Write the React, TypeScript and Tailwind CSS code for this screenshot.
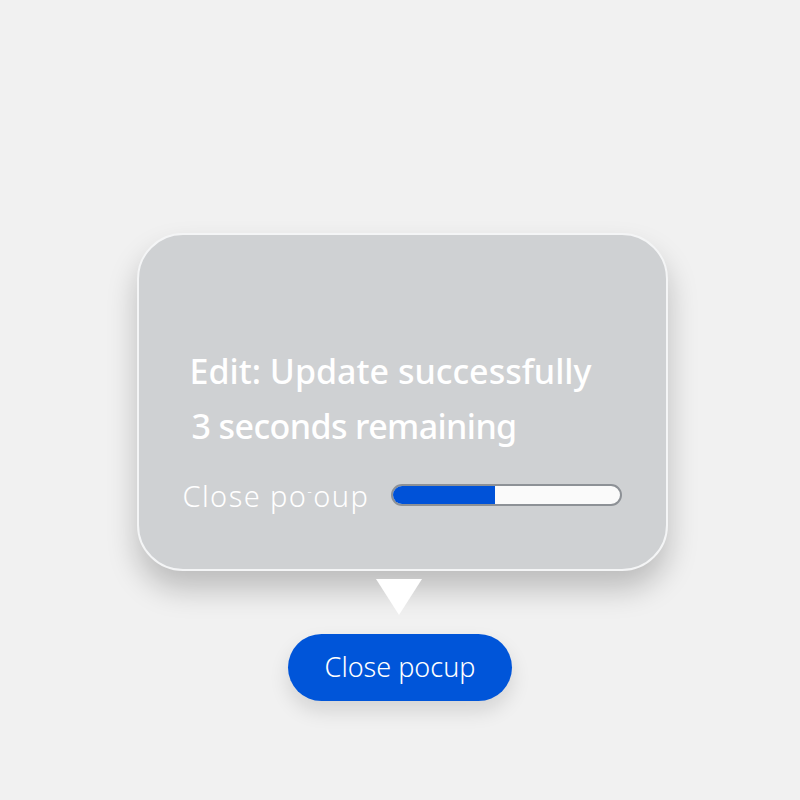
import React from "react";

export default function App() {
  return (
    <div
      className="w-[800px] h-[800px] bg-[#f1f1f1] flex flex-col items-center pt-[233px]"
      style={{ fontFamily: '"Noto Sans", "Open Sans", sans-serif' }}
    >
      <div className="w-[531px] h-[338px] rounded-[46px] border-2 border-[#f4f5f6] bg-[#cfd1d3] shadow-[0_18px_30px_rgba(0,0,0,0.22)] flex flex-col pl-[51px] pt-[113px] ml-[4px]">
        <div className="text-white text-[34px] font-medium leading-[46px] tracking-[0px]">
          Edit: Update successfully
        </div>
        <div className="text-white text-[34px] font-medium leading-[46px] mt-[9px] ml-[2px] -tracking-[0.6px]">
          3 seconds remaining
        </div>
        <div className="flex items-center mt-[22px] -ml-[7px]">
          <div className="text-white text-[29px] font-light leading-[40px] tracking-[1.4px] w-[208px]">
            Close po<span className="text-[14px] align-super">-</span>oup
          </div>
          <div className="mt-[4px] w-[231px] h-[22px] rounded-full bg-[#fafafa] border-2 border-[#8d9196] overflow-hidden flex">
            <div className="w-[102px] h-full bg-[#0052d8]" />
          </div>
        </div>
      </div>
      <svg width="46" height="36" viewBox="0 0 46 36" className="mt-[8px] -ml-[2px]">
        <polygon points="0,0 46,0 23,36" fill="#ffffff" />
      </svg>
      <button className="mt-[19px] w-[224px] h-[67px] rounded-full bg-[#0055d9] text-white text-[27px] font-light shadow-[0_10px_20px_rgba(0,0,0,0.12)]">
        Close pocup
      </button>
    </div>
  );
}
